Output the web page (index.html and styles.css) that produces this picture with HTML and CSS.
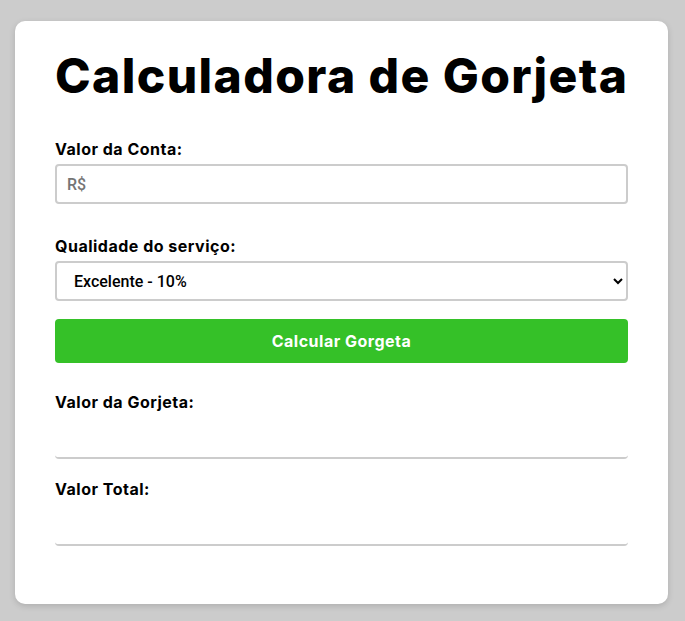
FILE: index.html
```html
<!DOCTYPE html>
<html lang="pt-BR">
<head>
<meta charset="utf-8">
<title>Calculadora de Gorjeta</title>
<link rel="stylesheet" href="styles.css">
</head>
<body>
<main class="card">
  <h1 class="title">Calculadora de Gorjeta</h1>
  <div class="field field-first">
    <label class="label" for="conta">Valor da Conta:</label>
    <input class="input" id="conta" type="text" placeholder="R$">
  </div>
  <div class="field">
    <label class="label" for="qualidade">Qualidade do serviço:</label>
    <select class="input select" id="qualidade">
      <option>Excelente - 10%</option>
    </select>
  </div>
  <button class="btn" type="button">Calcular Gorgeta</button>
  <div class="result">
    <div class="label">Valor da Gorjeta:</div>
    <div class="result-value"></div>
  </div>
  <div class="result">
    <div class="label">Valor Total:</div>
    <div class="result-value"></div>
  </div>
</main>
</body>
</html>
```
FILE: styles.css
```css
* { box-sizing: border-box; }
html, body { margin: 0; }
body {
  background: #cccccc;
  padding: 21px 0 17px 15px;
  font-family: "Inter", "Noto Sans", sans-serif;
}
.card {
  width: 653px;
  background: #fff;
  border-radius: 10px;
  box-shadow: 0 2px 6px rgba(0,0,0,0.15);
  padding: 24px 40px 58px 40px;
}
.title {
  margin: 0 0 31px;
  font-size: 48px;
  font-weight: 800;
  letter-spacing: 1.4px;
  line-height: 62px;
  color: #000;
  text-align: center;
  white-space: nowrap;
}
.label {
  display: block;
  font-size: 16px;
  font-weight: 700;
  letter-spacing: 0.5px;
  color: #000;
  line-height: 22px;
  margin-bottom: 4px;
}
.field { margin-bottom: 18px; }
.field-first { margin-bottom: 31px; }
.input {
  display: block;
  width: 100%;
  height: 40px;
  border: 2px solid #cccccc;
  border-radius: 4px;
  padding: 0 10px;
  font-family: "Roboto", sans-serif;
  font-size: 16px;
  font-weight: 500;
  background: #fff;
  color: #000;
}
.input::placeholder { color: #757575; }
.select { padding-left: 13px; height: 40px; }
.btn {
  display: block;
  width: 100%;
  height: 44px;
  border: none;
  border-radius: 4px;
  background: #35c128;
  color: #fff;
  font-family: "Inter", sans-serif;
  font-size: 16px;
  font-weight: 700;
  letter-spacing: 0.5px;
  cursor: pointer;
}
.result { margin-top: 28px; }
.result + .result { margin-top: 19px; }
.result-value {
  height: 42px;
  border-bottom: 2px solid #cccccc;
  border-radius: 0 0 4px 4px;
}
```
